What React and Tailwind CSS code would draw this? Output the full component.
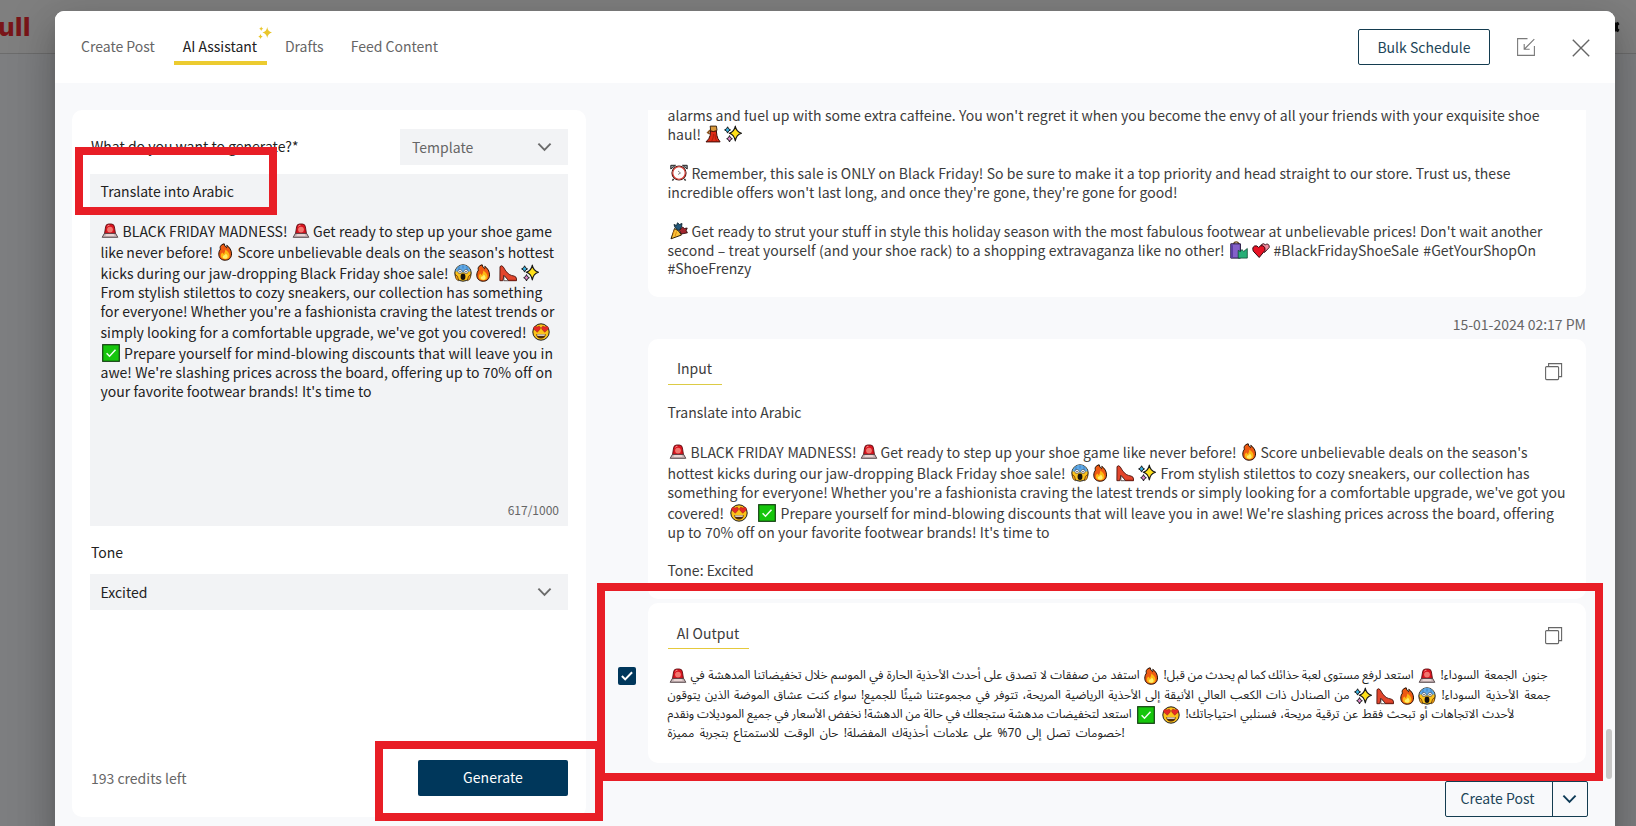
const EMOJI = {
  siren: (
    <>
      <path d="M3.400 12.500 4.600 4.800Q5 2 7.600 2h2.800Q13 2 13.400 4.800l1.200 7.700Z" fill="#d9141f" stroke="#5c1013" strokeWidth="0.9" />
      <circle cx="9" cy="7.600" r="2.900" fill="#f2776f" />
      <path d="M6.400 4.200q.8-1 2-.9" stroke="#ffb4ae" strokeWidth="0.9" fill="none" />
      <path d="M3.400 11.400h11.200l2.200 3.900H1.200Z" fill="#c9b6b8" stroke="#4a3a3d" strokeWidth="0.9" />
      <path d="M5.400 12.300h7.200l.9 1.500h-9Z" fill="#f3dedd" />
    </>
  ),
  fire: (
    <>
      <path d="M8.2.8c.4 2 .9 2.600 2.300 3.900.4-.7.5-1.500.3-2.400 3 2.200 4.700 5 4.700 8.600 0 4-2.500 6.300-6.300 6.300S2.800 15 2.800 11.200c0-2.200.6-3.700 1.700-5.100C3.400 4 4.800 1.500 8.200.8Z" fill="#ee5a12" stroke="#1c0d05" strokeWidth="1" />
      <path d="M9.300 6.600c2.800 2 4.200 3.800 4.200 6 0 2.300-1.600 3.700-4.200 3.700s-4.500-1.300-4.500-3.800c0-1.500.7-2.300 1.800-3 .2.800.6 1.200 1.300 1.400.9-1.200 1.400-2.600 1.400-4.300Z" fill="#fdb813" />
      <path d="M9.600 10.400c1.500 1.200 2 2.200 2 3.300 0 1.300-1 2-2.300 2s-2.500-.6-2.500-1.900c0-1 .8-1.400 1.500-1.500.7-.3 1.100-.8 1.300-1.900Z" fill="#ffee6b" />
    </>
  ),
  scream: (
    <>
      <circle cx="9" cy="9" r="8.200" fill="#fcc21b" stroke="#1d1d1d" strokeWidth="1" />
      <path d="M1.400 7.300a7.700 7.700 0 0 1 15.200 0Q9 9.500 1.400 7.300Z" fill="#5fa9e6" />
      <path d="M5 2.500v4M9 1.500v3M13 2.500v4" stroke="#3277bd" strokeWidth="0.8" />
      <circle cx="6" cy="7.600" r="2.100" fill="#fff" stroke="#222" strokeWidth="0.5" />
      <circle cx="12" cy="7.600" r="2.100" fill="#fff" stroke="#222" strokeWidth="0.5" />
      <circle cx="6" cy="7.700" r="0.7" fill="#111" />
      <circle cx="12" cy="7.700" r="0.7" fill="#111" />
      <ellipse cx="9" cy="12.700" rx="2.400" ry="3.200" fill="#15110d" />
      <path d="M1.300 10.500q2.700.5 3.500 6.300Q1 16 1.300 10.500ZM16.700 10.500q-2.700.5-3.500 6.300 3.800-.8 3.500-6.300Z" fill="#f09b14" stroke="#3a2508" strokeWidth="0.6" />
    </>
  ),
  shoe: (
    <>
      <path d="M1 2.600Q2.600.8 4.200 2.800q2.600 5.400 6 7.600 2.200 1.200 5 1.700 2.300.6 2.300 2.900v1.700H9.600L5 11.500 3.800 16.700H.9Z" fill="#e2452c" stroke="#4a1610" strokeWidth="0.9" strokeLinejoin="round" />
      <path d="M5 11.600 9.600 16.700H4.800Z" fill="#fff" stroke="#2a1512" strokeWidth="0.7" />
      <path d="M9.700 16.300h7.700" stroke="#7d1d12" strokeWidth="1" />
    </>
  ),
  sparkles: (
    <>
      <path d="M11.300 1.100q.9 5.600 6.200 7.200-5.300 1.500-6.200 7.700-1-6.200-6-7.700 5-1.500 6-7.200Z" fill="#ffe11a" stroke="#161616" strokeWidth="1.100" strokeLinejoin="round" />
      <path d="M3.600 1.800q.5 2.400 2.900 3.100-2.400.7-2.900 3.200Q3.100 5.600.6 4.900q2.500-.7 3-3.100Z" fill="#39b5e6" stroke="#161616" strokeWidth="1" />
      <path d="M5.500 10.600q.5 2.500 2.800 3.100-2.300.6-2.800 3.200-.5-2.600-2.800-3.200 2.300-.6 2.800-3.100Z" fill="#e58bd0" stroke="#161616" strokeWidth="1" />
    </>
  ),
  hearteyes: (
    <>
      <circle cx="9" cy="9" r="8.200" fill="#fcc21b" stroke="#1d1d1d" strokeWidth="1" />
      <path d="M5.300 9.300 1.700 6Q1 3.800 2.900 3.300q1.400-.2 2.100 1Q5.800 3 7.300 3.300q1.600.6 1 2.600ZM12.700 9.300 9.700 5.900q-.6-2 1-2.600 1.500-.3 2.300 1 .7-1.200 2.100-1 1.900.5 1.200 2.700Z" fill="#e62a25" stroke="#7b130e" strokeWidth="0.4" />
      <path d="M4.200 11.200h9.600q-.7 4.300-4.800 4.300t-4.800-4.300Z" fill="#4f2a0a" />
      <path d="M5 11.500h8l-.4 1.300H5.400Z" fill="#fff" />
    </>
  ),
  check: (
    <>
      <rect x="0.700" y="0.700" width="16.600" height="16.600" fill="#16c60c" stroke="#123f10" strokeWidth="1.200" />
      <path d="m4.600 9.300 2.900 2.900 6-6.400" fill="none" stroke="#f3fff2" strokeWidth="1.500" />
    </>
  ),
  dress: (
    <>
      <path d="M6.200 1.100h6.200l.6 3.900-1.300 2.200H6.800Z" fill="#d99a3c" stroke="#2b1708" strokeWidth="0.9" />
      <path d="M6.200 5 3.800 7.500l1.900 1.300" fill="none" stroke="#8a5520" strokeWidth="1.700" />
      <path d="M6.400 5.800q2.800 1.500 5.900 0l.6 4.600q.4 3 3.200 6.500H2q3.400-3 4.200-6.500Z" fill="#dd2a16" stroke="#3c0b06" strokeWidth="1" />
      <path d="M9.500 9q0 4-1.700 7M11 9.500q.2 4 1.500 6.500" stroke="#9d1509" strokeWidth="0.7" fill="none" />
    </>
  ),
  clock: (
    <>
      <path d="M.8 5V1.300h4.700ZM17.200 5V1.300h-4.700Z" fill="#9aa3ab" stroke="#222" strokeWidth="1" />
      <path d="m3.600 14.800-1.200 1.800M14.400 14.800l1.200 1.800" stroke="#333" strokeWidth="1.500" />
      <circle cx="9" cy="9" r="7" fill="#fff" stroke="#3b1512" strokeWidth="1.200" />
      <circle cx="9" cy="9" r="6.200" fill="#fdfdfd" stroke="#d9362b" strokeWidth="1.100" />
      <path d="m8 7 2.500 2L8 10.500" fill="none" stroke="#666" strokeWidth="0.800" />
    </>
  ),
  party: (
    <>
      <path d="M4.500 6.500 1 16.800 11.500 13Q9 8 4.500 6.500Z" fill="#fbc43a" stroke="#2c1d05" strokeWidth="1" strokeLinejoin="round" />
      <path d="M4.400 8.200 3 12.500M6.500 9.500 5 14.500" stroke="#e08a13" strokeWidth="1" />
      <path d="M5 5.500 4 2.500l2.500 1L7.500.8 9.500 2.500 12 1.500 11.500 5 9 8.500Z" fill="#23587a" stroke="#0e2530" strokeWidth="0.9" />
      <path d="m9.500 8.500 3-3.500 2 1.500L17.200 6l-1 2.500 1.200 2.300-3.500.7-2.500.5Z" fill="#a3262e" stroke="#2c0a0c" strokeWidth="0.9" />
    </>
  ),
  bags: (
    <>
      <path d="M3.600 3.500Q4 .8 6.200.8T9 3.500" fill="none" stroke="#6b4a1c" strokeWidth="1.300" />
      <path d="M.8 2.800h9.600v14.300H.8Z" fill="#8560c9" stroke="#22163b" strokeWidth="1" />
      <path d="M.8 2.800 3 4.600v12.500H.8Z" fill="#5b3fa0" />
      <path d="m8.200 9.400 2.200 1.200L12 8.500l1.600 2 3.700-3v9.600H8.200Z" fill="#27ae76" stroke="#0f4a32" strokeWidth="0.800" />
    </>
  ),
  hearts: (
    <>
      <path d="M12.500 11.500 8.700 6.500Q8.500 3 11.200 2.700q1.500 0 2.100 1.300.9-1.200 2.500-.8 2 .8 1.400 3.300Z" fill="#ef8a9d" stroke="#2e0a10" strokeWidth="0.900" />
      <path d="M7.200 16.500 1.300 10.200Q-.2 6.500 2.500 5q2.500-.9 4.200 1.500 1.500-2.500 4.200-1.700 3 1.300 2 4.700Z" fill="#e81224" stroke="#2e0a10" strokeWidth="1" />
    </>
  ),
};

const E = ({ n, className = "" }) => (
  <svg viewBox="0 0 18 18" className={`mb-px h-[18px] w-[18px] shrink-0 ${className}`} aria-hidden="true">
    {EMOJI[n]}
  </svg>
);

/* One run of text, justified to a fixed measure */
const S = ({ className = "", children }) => (
  <span
    className={`shrink-0 whitespace-nowrap leading-5 tracking-[0.02px] [text-align-last:justify] [word-spacing:-1px] ${className}`}
  >
    {children}
  </span>
);

/* One run of right-to-left text */
const R = ({ className = "", children }) => (
  <span
    dir="rtl"
    className={`mb-px shrink-0 whitespace-nowrap font-['Noto_Sans_Arabic','Noto_Naskh_Arabic',serif] text-[12px] leading-[18px] text-[#222] [text-align-last:justify] [word-spacing:-1.500px] ${className}`}
  >
    {children}
  </span>
);

const Row = ({ className = "h-[19px]", children }) => (
  <div className={`flex items-end ${className}`}>{children}</div>
);

const Chevron = ({ className }) => (
  <svg viewBox="0 0 16 10" fill="none" stroke="currentColor" strokeWidth="2" className={className}>
    <path d="m1.500 1.500 6.500 6.700 6.500-6.700" />
  </svg>
);

const CopyIcon = () => (
  <svg viewBox="0 0 18 18" fill="none" stroke="#666" strokeWidth="1.100" className="h-[18px] w-[18px]">
    <rect x="0.600" y="3.600" width="13" height="13" rx="1" />
    <path d="M3.600 3.600V.6h13v13h-3" />
  </svg>
);

function Header() {
  return (
    <header className="flex h-[72px] shrink-0 items-start bg-white pr-[25px] pl-[14px] text-[#666]">
      <nav className="flex pt-[25px] leading-5">
        <span className="px-[12px]">Create Post</span>
        <span className="relative ml-[7px] flex h-[29px] w-[93px] justify-center border-b-4 border-[#eccb2f] text-[#222]">
          <span className="-ml-px">AI Assistant</span>
          <svg viewBox="0 0 15 14" fill="#e9c62c" className="absolute -top-[10px] left-[84px] h-[14px] w-[15px]">
            <path d="M9.200 1q.6 4.600 4.800 5.500-4.200 1-4.800 5.500Q8.600 7.500 4.500 6.500 8.600 5.600 9.200 1ZM3.200.5q.3 1.900 2.100 2.300-1.800.4-2.100 2.300Q2.900 3.200 1.200 2.800 2.900 2.400 3.200.5ZM2.500 8q.3 2 2.200 2.500-1.900.5-2.200 2.500Q2.200 11 .3 10.500 2.200 10 2.500 8Z" />
          </svg>
        </span>
        <span className="ml-[18px]">Drafts</span>
        <span className="ml-[27px]">Feed Content</span>
      </nav>
      <div className="mt-[18px] ml-auto flex items-center">
        <button className="h-9 w-[132px] rounded-[2px] border border-[#143c50] text-[#214558]">Bulk Schedule</button>
        <svg viewBox="0 0 18 18" fill="none" stroke="#7a7a7a" strokeWidth="1.100" className="ml-[27px] h-[18px] w-[18px]">
          <path d="M10.500.6H.6v16.800h16.800V8" />
          <path d="M17.300 1.200 7.500 11M7.200 6v5.200h5.500" />
        </svg>
        <svg viewBox="0 0 18 18" fill="none" stroke="#666" strokeWidth="1.400" className="mt-px ml-[37px] h-[18px] w-[18px]">
          <path d="m.8.8 16.400 16.400M17.200.8.8 17.200" />
        </svg>
      </div>
    </header>
  );
}

function Generator() {
  return (
    <section className="flex h-[707px] w-[514px] shrink-0 flex-col rounded-[10px] bg-white px-[18px] pt-[19px] text-[#222]">
      <div className="flex h-9 items-center justify-between">
        <span className="pb-0.5 pl-px leading-5">What do you want to generate?*</span>
        <div className="flex h-9 w-[168px] items-center justify-between bg-[#f2f3f5] pr-[16px] pl-[12px] text-[#666]">
          <span>Template</span>
          <Chevron className="h-[10px] w-[15px] text-[#6b6b6b]" />
        </div>
      </div>
      <div className="mt-[9px] flex h-[352px] flex-col bg-[#f2f3f5] pt-[8px] pr-[11px] pl-[10.500px]">
        <Row className="h-5">Translate into Arabic</Row>
        <Row className="mt-[18px] h-[21px]">
          <E n="siren" />
          <S className="ml-[4px] w-[165px]">BLACK FRIDAY MADNESS!</S>
          <E n="siren" className="ml-[4px]" />
          <S className="ml-[3.500px] w-[239px]">Get ready to step up your shoe game</S>
        </Row>
        <Row className="h-[21px]">
          <S className="w-[112.500px]">like never before!</S>
          <E n="fire" className="ml-[3px]" />
          <S className="ml-[3.500px] w-[316.500px]">Score unbelievable deals on the season's hottest</S>
        </Row>
        <Row className="h-[21px]">
          <S className="w-[348px]">kicks during our jaw-dropping Black Friday shoe sale!</S>
          <E n="scream" className="ml-[5px]" />
          <E n="fire" className="ml-[2px]" />
          <E n="shoe" className="ml-[7px]" />
          <E n="sparkles" className="ml-[4px]" />
        </Row>
        <Row><S className="w-[442px]">From stylish stilettos to cozy sneakers, our collection has something</S></Row>
        <Row><S className="w-[454px]">for everyone! Whether you're a fashionista craving the latest trends or</S></Row>
        <Row className="h-[21px]">
          <S className="w-[426px]">simply looking for a comfortable upgrade, we've got you covered!</S>
          <E n="hearteyes" className="ml-[5.500px]" />
        </Row>
        <Row className="h-[21px]">
          <E n="check" className="ml-[1px]" />
          <S className="ml-[4.500px] w-[429px]">Prepare yourself for mind-blowing discounts that will leave you in</S>
        </Row>
        <Row><S className="w-[452px]">awe! We're slashing prices across the board, offering up to 70% off on</S></Row>
        <Row><S className="w-[271px]">your favorite footwear brands! It's time to</S></Row>
        <span className="mt-auto -mr-[2px] pb-[6px] text-right text-[12px] leading-5 text-[#666]">617/1000</span>
      </div>
      <span className="mt-[16px] pl-px leading-5">Tone</span>
      <div className="mt-[12px] flex h-9 items-center justify-between bg-[#f2f3f5] pr-[16px] pl-[10.500px]">
        <span>Excited</span>
        <Chevron className="h-[10px] w-[15px] text-[#6b6b6b]" />
      </div>
      <div className="mt-[150px] flex h-9 items-center justify-between text-[#666]">
        <span className="pl-px">193 credits left</span>
        <button className="h-9 w-[150px] rounded-[2px] bg-[#00375b] pb-px tracking-[0.08px] text-white">Generate</button>
      </div>
    </section>
  );
}

function History() {
  return (
    <div className="h-[663px] w-[938px] overflow-hidden text-[#3c3c3c]">
      <article className="h-[187px] rounded-b-[10px] bg-white pl-[19.500px]">
        <Row className="h-[15px]"><S className="w-[872px]">alarms and fuel up with some extra caffeine. You won't regret it when you become the envy of all your friends with your exquisite shoe</S></Row>
        <Row>
          <S>haul!</S>
          <E n="dress" className="ml-[3px]" />
          <E n="sparkles" className="ml-[2px]" />
        </Row>
        <Row className="mt-[19px]">
          <E n="clock" className="ml-[2px]" />
          <S className="ml-[4px] w-[819px]">Remember, this sale is ONLY on Black Friday! So be sure to make it a top priority and head straight to our store. Trust us, these</S>
        </Row>
        <Row><S className="w-[510px]">incredible offers won't last long, and once they're gone, they're gone for good!</S></Row>
        <Row className="mt-[19px]">
          <E n="party" className="ml-[2px]" />
          <S className="ml-[4px] w-[851px]">Get ready to strut your stuff in style this holiday season with the most fabulous footwear at unbelievable prices! Don't wait another</S>
        </Row>
        <Row>
          <S className="w-[557px]">second – treat yourself (and your shoe rack) to a shopping extravaganza like no other!</S>
          <E n="bags" className="ml-[5px]" />
          <E n="hearts" className="ml-[4px]" />
          <S className="ml-[4px] w-[262.500px]">#BlackFridayShoeSale #GetYourShopOn</S>
        </Row>
        <Row>#ShoeFrenzy</Row>
      </article>
      <p className="mt-[17px] text-right leading-5 text-[#666]">15-01-2024 02:17 PM</p>
      <article className="mt-[5px] flex h-[260px] items-start justify-between rounded-[10px] bg-white pr-[23px] pl-[19.500px]">
        <div>
          <h3 className="mt-[19px] w-[54px] border-b border-[#dccb45] pb-[6px] text-center leading-5">Input</h3>
          <Row className="mt-[17px] h-5"><S className="w-[134px]">Translate into Arabic</S></Row>
          <Row className="mt-[19px] h-[21px]">
            <E n="siren" className="ml-[1px]" />
            <S className="ml-[4px] w-[166px]">BLACK FRIDAY MADNESS!</S>
            <E n="siren" className="ml-[3px]" />
            <S className="ml-[3px] w-[356px]">Get ready to step up your shoe game like never before!</S>
            <E n="fire" className="ml-[3px]" />
            <S className="ml-[3px] w-[267px]">Score unbelievable deals on the season's</S>
          </Row>
          <Row className="h-[21px]">
            <S className="w-[398px]">hottest kicks during our jaw-dropping Black Friday shoe sale!</S>
            <E n="scream" className="ml-[5px]" />
            <E n="fire" className="ml-[2px]" />
            <E n="shoe" className="ml-[7px]" />
            <E n="sparkles" className="ml-[4px]" />
            <S className="ml-[5px] w-[369px]">From stylish stilettos to cozy sneakers, our collection has</S>
          </Row>
          <Row><S className="w-[898px]">something for everyone! Whether you're a fashionista craving the latest trends or simply looking for a comfortable upgrade, we've got you</S></Row>
          <Row className="h-[21px]">
            <S className="w-[57px]">covered!</S>
            <E n="hearteyes" className="ml-[5px]" />
            <E n="check" className="ml-[10px]" />
            <S className="ml-[5px] w-[773.500px]">Prepare yourself for mind-blowing discounts that will leave you in awe! We're slashing prices across the board, offering</S>
          </Row>
          <Row><S className="w-[382px]">up to 70% off on your favorite footwear brands! It's time to</S></Row>
          <Row className="mt-[18px]">Tone: Excited</Row>
        </div>
        <div className="-ml-[100px] pt-[24px]"><CopyIcon /></div>
      </article>
      <article className="mt-1 flex h-[160px] items-start justify-between rounded-[10px] bg-white pr-[23px] pl-[19.500px]">
        <div>
          <h3 className="mt-[20px] w-[81px] border-b border-[#e5c93c] pb-[5px] text-center leading-5">AI Output</h3>
          <Row className="mt-[18px] h-[19px]">
            <E n="siren" className="ml-[1px]" />
            <R className="ml-[4px] w-[449px]">استفد من صفقات لا تصدق على أحدث الأحذية الحارة في الموسم خلال تخفيضاتنا المدهشة في</R>
            <E n="fire" className="ml-[2px]" />
            <R className="ml-[4px] w-[250px]">استعد لرفع مستوى لعبة حذائك كما لم يحدث من قبل!</R>
            <E n="siren" className="ml-[4px]" />
            <R className="ml-[5px] w-[107px]">جنون الجمعة السوداء!</R>
          </Row>
          <Row className="h-5">
            <R className="w-[682px]">من الصنادل ذات الكعب العالي الأنيقة إلى الأحذية الرياضية المريحة، تتوفر في مجموعتنا شيئًا للجميع! سواء كنت عشاق الموضة الذين يتوقون</R>
            <E n="sparkles" className="ml-[4px]" />
            <E n="shoe" className="ml-[4px]" />
            <E n="fire" className="ml-[4px]" />
            <E n="scream" className="ml-[2px]" />
            <R className="ml-[6px] w-[109px]">جمعة الأحذية السوداء!</R>
          </Row>
          <Row>
            <R className="w-[464px]">استعد لتخفيضات مدهشة ستجعلك في حالة من الدهشة! نخفض الأسعار في جميع الموديلات ونقدم</R>
            <E n="check" className="ml-[5px]" />
            <E n="hearteyes" className="ml-[7px]" />
            <R className="ml-[6px] w-[329px]">لأحدث الاتجاهات أو تبحث فقط عن ترقية مريحة، فسنلبي احتياجاتك!</R>
          </Row>
          <Row>
            <R className="w-[454px]">خصومات تصل إلى 70% على علامات أحذيةك المفضلة! حان الوقت للاستمتاع بتجربة مميزة</R>
            <R>!</R>
          </Row>
        </div>
        <div className="-ml-[100px] pt-[24px]"><CopyIcon /></div>
      </article>
    </div>
  );
}

export default function App() {
  return (
    <div className="relative h-[826px] w-[1636px] overflow-hidden bg-[#7d7e80] font-['Noto_Sans_CJK_SC','Noto_Sans',sans-serif] text-[14px]">
      <div className="flex h-[54px] items-start justify-between border-b border-[#6c6c6c] bg-[#7f7f7f]">
        <span className="-ml-[2px] pt-[11px] font-['Inter',sans-serif] text-[26px] leading-[31px] font-extrabold tracking-[0.500px] text-[#791519]">
          ull
        </span>
        <svg viewBox="0 0 16 16" className="mt-[19px] mr-[15px] h-4 w-4" fill="#0a0a0a">
          <path d="M6.500 1h3v2l1.500.8 2-1 1.500 2.500L13 6.500v3l1.500 1.200L13 13.200l-2-1-1.500.8v2h-3Z" />
        </svg>
      </div>

      <div className="absolute top-[11px] left-[55px] flex h-[840px] w-[1560px] flex-col overflow-hidden rounded-[9px] bg-[#f8f9fb] shadow-[0_11px_15px_-7px_rgba(0,0,0,.2),0_24px_38px_3px_rgba(0,0,0,.14),0_9px_46px_8px_rgba(0,0,0,.12)]">
        <Header />
        <div className="flex pt-[27px] pl-[17px]">
          <Generator />
          <div className="flex w-[1029px] flex-col">
            <div className="flex">
              <div className="flex w-[62px] justify-end pt-[557px] pr-[12px]">
                <span className="flex h-[18px] w-[18px] items-center justify-center rounded-[2px] bg-[#00375b]">
                  <svg viewBox="0 0 12 10" fill="none" stroke="#fff" strokeWidth="2" className="h-[10px] w-[12px]">
                    <path d="m.9 5 3.300 3.400L11.100 1.200" />
                  </svg>
                </span>
              </div>
              <History />
              <div className="ml-auto flex w-[9px] justify-between pt-[619px]">
                <span className="h-[50px] w-[6px] rounded-full bg-[#c7c7c7]" />
              </div>
            </div>
            <div className="mt-[2px] ml-[859px] flex h-9 w-[143px] items-center rounded-[2px] border border-[#143c50] text-[#214558]">
              <span className="flex h-full w-[107px] items-center justify-center border-r border-[#143c50] pr-[3px] pb-px">Create Post</span>
              <Chevron className="ml-[9px] h-[10px] w-[15px] text-[#0d3a56]" />
            </div>
          </div>
        </div>
      </div>

      <div className="pointer-events-none absolute top-[147px] left-[75px] h-[68px] w-[202px] border-8 border-[#e81e26]" />
      <div className="pointer-events-none absolute top-[741px] left-[375px] h-[80px] w-[228px] border-8 border-[#e81e26]" />
      <div className="pointer-events-none absolute top-[583px] left-[597px] h-[198px] w-[1006px] border-8 border-[#e81e26]" />
    </div>
  );
}
